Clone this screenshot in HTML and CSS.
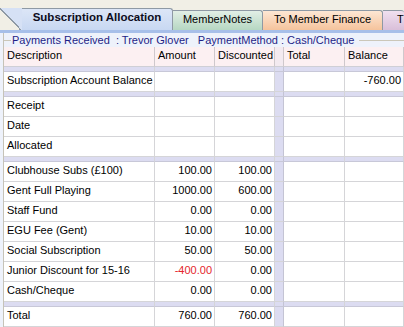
FILE: index.html
```html
<!DOCTYPE html>
<html>
<head>
<meta charset="utf-8">
<link rel="stylesheet" href="styles.css">
</head>
<body>
<div class="tabs">
  <div class="tab tab-active">Subscription Allocation</div>
  <div class="tab tab-notes">MemberNotes</div>
  <div class="tab tab-fin">To Member Finance</div>
  <div class="tab tab-more">T</div>
</div>
<div class="panel">
  <div class="gbox">
    <div class="ghead">
      <span class="gline short"></span>
      <span class="gtext">Payments Received  : Trevor Glover   PaymentMethod : Cash/Cheque</span>
      <span class="gline long"></span>
    </div>
    <div class="grid">
      <div class="row head">
        <div class="c">Description</div><div class="c">Amount</div><div class="c">Discounted</div><div class="c sp"></div><div class="c">Total</div><div class="c">Balance</div>
      </div>
      <div class="row band"><div class="c"></div><div class="c"></div><div class="c"></div><div class="c sp"></div><div class="c"></div><div class="c"></div></div>
      <div class="row">
        <div class="c">Subscription Account Balance</div><div class="c n"></div><div class="c n"></div><div class="c sp"></div><div class="c n"></div><div class="c n">-760.00</div>
      </div>
      <div class="row band"><div class="c"></div><div class="c"></div><div class="c"></div><div class="c sp"></div><div class="c"></div><div class="c"></div></div>
      <div class="row"><div class="c">Receipt</div><div class="c n"></div><div class="c n"></div><div class="c sp"></div><div class="c n"></div><div class="c n"></div></div>
      <div class="row"><div class="c">Date</div><div class="c n"></div><div class="c n"></div><div class="c sp"></div><div class="c n"></div><div class="c n"></div></div>
      <div class="row"><div class="c">Allocated</div><div class="c n"></div><div class="c n"></div><div class="c sp"></div><div class="c n"></div><div class="c n"></div></div>
      <div class="row band"><div class="c"></div><div class="c"></div><div class="c"></div><div class="c sp"></div><div class="c"></div><div class="c"></div></div>
      <div class="row"><div class="c">Clubhouse Subs (£100)</div><div class="c n">100.00</div><div class="c n">100.00</div><div class="c sp"></div><div class="c n"></div><div class="c n"></div></div>
      <div class="row"><div class="c">Gent Full Playing</div><div class="c n">1000.00</div><div class="c n">600.00</div><div class="c sp"></div><div class="c n"></div><div class="c n"></div></div>
      <div class="row"><div class="c">Staff Fund</div><div class="c n">0.00</div><div class="c n">0.00</div><div class="c sp"></div><div class="c n"></div><div class="c n"></div></div>
      <div class="row"><div class="c">EGU Fee (Gent)</div><div class="c n">10.00</div><div class="c n">10.00</div><div class="c sp"></div><div class="c n"></div><div class="c n"></div></div>
      <div class="row"><div class="c">Social Subscription</div><div class="c n">50.00</div><div class="c n">50.00</div><div class="c sp"></div><div class="c n"></div><div class="c n"></div></div>
      <div class="row"><div class="c">Junior Discount for 15-16</div><div class="c n neg">-400.00</div><div class="c n">0.00</div><div class="c sp"></div><div class="c n"></div><div class="c n"></div></div>
      <div class="row"><div class="c">Cash/Cheque</div><div class="c n">0.00</div><div class="c n">0.00</div><div class="c sp"></div><div class="c n"></div><div class="c n"></div></div>
      <div class="row band"><div class="c"></div><div class="c"></div><div class="c"></div><div class="c sp"></div><div class="c"></div><div class="c"></div></div>
      <div class="row"><div class="c">Total</div><div class="c n">760.00</div><div class="c n">760.00</div><div class="c sp"></div><div class="c n"></div><div class="c n"></div></div>
    </div>
  </div>
</div>
</body>
</html>
```

FILE: styles.css
```css
html, body {
  margin: 0;
  padding: 0;
  width: 404px;
  height: 327px;
  overflow: hidden;
  background: #ffffff;
  font-family: "Liberation Sans", Arial, sans-serif;
  font-size: 11px;
  color: #000;
}

.tabs {
  display: flex;
  align-items: flex-end;
  height: 30px;
  padding-left: 22px;
  background: #f1efe6;
  overflow: hidden;
  box-sizing: border-box;
}

.tab {
  flex-shrink: 0;
  box-sizing: border-box;
  height: 20px;
  border-top: 1px solid #8e99a4;
  border-right: 1px solid #8e99a4;
  border-radius: 0 3px 0 0;
  line-height: 13px;
  padding-top: 2px;
  text-align: center;
  white-space: nowrap;
  overflow: hidden;
}

.tab-active {
  position: relative;
  width: 151px;
  height: 22px;
  line-height: 17px;
  padding-top: 0;
  font-weight: bold;
  font-size: 11.5px;
  color: #0c0c20;
  overflow: visible;
  background: linear-gradient(#dce6f7, #c8d8f2);
}

.tab-active::before {
  content: "";
  position: absolute;
  left: -22px;
  top: -1px;
  width: 22px;
  height: 23px;
  background: linear-gradient(to top right,
    rgba(0,0,0,0) calc(50% - 0.8px),
    #8e99a4 calc(50% - 0.8px),
    #8e99a4 calc(50% + 0.6px),
    #d6e1f5 calc(50% + 0.6px));
}

.tab-notes {
  width: 90px;
  background: linear-gradient(#e2efe6, #b6d7c2);
}

.tab-fin {
  width: 120px;
  background: linear-gradient(#fde7d4, #f5c39c);
}

.tab-more {
  width: 21px;
  text-align: left;
  padding-left: 14px;
  border-right: none;
  background: linear-gradient(#f0e0f0, #d9bfd9);
}

.panel {
  background: #eef2fb;
  border-top: 3px solid #a7bfe9;
  padding-left: 3px;
}

.gbox {
  border-left: 1px solid #c6c3b8;
}

.ghead {
  display: flex;
  align-items: center;
  height: 14px;
}

.gline {
  height: 1px;
  background: #cbc7b9;
}

.gline.short {
  width: 7px;
  margin-right: 1px;
}

.gline.long {
  flex: 1;
  margin-left: 5px;
}

.gtext {
  white-space: pre;
  color: #1e1e86;
  line-height: 12px;
  padding-bottom: 1px;
}

.grid {
  background: #fff;
}

.row {
  display: grid;
  grid-template-columns: 151px 60px 60px 9px 61px 1fr;
  height: 20px;
}

.c {
  box-sizing: border-box;
  border-right: 1px solid #d5d5d8;
  border-bottom: 1px solid #d5d5d8;
  padding: 0 3px 2px 3px;
  line-height: 17px;
  white-space: nowrap;
  overflow: hidden;
}

.c.n {
  text-align: right;
  padding-right: 2px;
}

.c.neg {
  color: #e4252b;
}

.c.sp {
  background: #dcdcf1;
  border-right-color: #c4c4d4;
}

.head .c {
  background: #fcf0f2;
  border-right-color: #cfc8cc;
  border-bottom-color: #cfcfd6;
}

.head .c.sp {
  background: #f3eaf0;
}

.row.band {
  height: 5px;
}

.band .c {
  background: #dcdcf1;
  padding: 0;
  border-bottom-color: #c8c8d8;
}
```
